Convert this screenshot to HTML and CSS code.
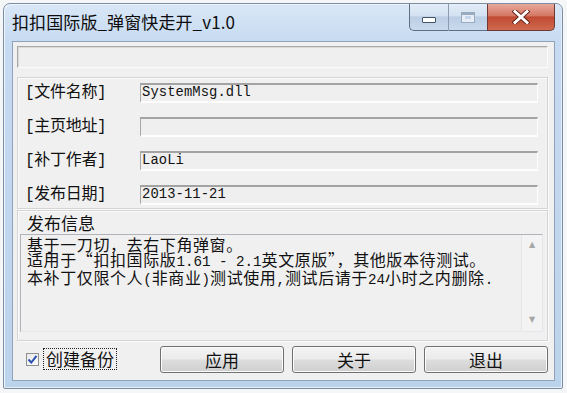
FILE: index.html
```html
<!DOCTYPE html>
<html lang="zh-CN">
<head>
<meta charset="utf-8">
<link rel="stylesheet" href="styles.css">
</head>
<body>
<div class="win">
  <div class="titlebar">
    <span class="title">扣扣国际版_弹窗快走开_v1.0</span>
    <div class="caps">
      <div class="cap min"><span class="min-glyph"></span></div>
      <div class="cap max"><span class="max-glyph"></span></div>
      <div class="cap close"><svg width="22" height="14" viewBox="0 0 22 14"><path d="M5 1.5 L17 12.5 M17 1.5 L5 12.5" stroke="#5a1a10" stroke-width="4.6" stroke-linecap="square"/><path d="M5 1.5 L17 12.5 M17 1.5 L5 12.5" stroke="#fff" stroke-width="3" stroke-linecap="square"/></svg></div>
    </div>
  </div>
  <div class="client">
    <div class="topbox"></div>
    <div class="group fields">
      <div class="row"><span class="label">[文件名称]</span><div class="field"><span class="en">SystemMsg.dll</span></div></div>
      <div class="row"><span class="label">[主页地址]</span><div class="field"></div></div>
      <div class="row"><span class="label">[补丁作者]</span><div class="field"><span class="en">LaoLi</span></div></div>
      <div class="row"><span class="label">[发布日期]</span><div class="field"><span class="en">2013-11-21</span></div></div>
    </div>
    <div class="group info">
      <div class="info-label">发布信息</div>
      <div class="memo">
        <div class="memo-text">
          <div>基于一刀切，去右下角弹窗。</div>
          <div>适用于“扣扣国际版<span class="en">1.61 - 2.1</span>英文原版”，其他版本待测试。</div>
          <div>本补丁仅限个人<span class="en">(</span>非商业<span class="en">)</span>测试使用<span class="en">,</span>测试后请于<span class="en">24</span>小时之内删除<span class="en">.</span></div>
        </div>
        <div class="scroll"><span class="arr">▲</span><span class="arr">▼</span></div>
      </div>
    </div>
    <div class="footer">
      <div class="check">
        <span class="box"><svg width="11" height="11" viewBox="0 0 11 11"><path d="M1.5 5.5 L4.3 8.5 L9.5 1.8" fill="none" stroke="#2a4fb0" stroke-width="2"/></svg></span>
        <span class="check-label">创建备份</span>
      </div>
      <div class="buttons">
        <div class="btn">应用</div>
        <div class="btn">关于</div>
        <div class="btn">退出</div>
      </div>
    </div>
  </div>
</div>
</body>
</html>
```
FILE: styles.css
```css
* { box-sizing: border-box; }
html, body { margin: 0; padding: 0; }
body {
  width: 567px; height: 393px;
  background: #f4f6f8;
  font-family: "Noto Sans CJK SC", sans-serif;
  overflow: hidden;
}
.win {
  margin: 3px;
  width: 560px; height: 386px;
  border: 1px solid #7c8ea3;
  border-radius: 7px 7px 2px 2px;
  background: linear-gradient(180deg, #d9e7f7 0px, #c6daf1 40px, #bcd3ec 100%);
  padding: 0 7px 7px 8px;
  display: flex; flex-direction: column;
  box-shadow: inset 1px 1px 0 #eef5fc, inset -1px -1px 0 #e5eef8;
}
.titlebar {
  height: 37px;
  display: flex; justify-content: space-between; align-items: flex-start;
}
.title {
  margin-top: 7px;
  font-size: 17px; line-height: 22px;
  color: #0c0c0c;
  letter-spacing: 0.1px;
}
.caps { display: flex; margin-top: 0; }
.cap {
  height: 27px;
  border: 1px solid #5f6f83;
  border-top: none;
  display: flex; align-items: center; justify-content: center;
}
.min {
  width: 40px;
  border-radius: 0 0 0 5px;
  background: linear-gradient(180deg, #e4edf8 0%, #d3e1f1 45%, #bccee4 50%, #c9daee 100%);
  border-right: 1px solid #8b9bb0;
}
.max {
  width: 38px;
  border-left: none; border-right: none;
  background: linear-gradient(180deg, #e4edf8 0%, #d3e1f1 45%, #bccee4 50%, #c9daee 100%);
}
.close {
  width: 68px;
  border-radius: 0 0 5px 0;
  background: linear-gradient(180deg, #e9a99c 0%, #d47764 45%, #c04a31 50%, #cf6a4f 100%);
  border-color: #6e3a33;
}
.min-glyph {
  width: 14px; height: 6px;
  margin-top: 5px;
  border: 1px solid #435469;
  background: #fff;
  border-radius: 1px;
}
.max-glyph {
  width: 14px; height: 11px;
  border: 1px solid #9aabbf;
  box-shadow: inset 0 2px 0 #9aabbf, inset 0 0 0 3px #e7eef7;
  background: #c7d6e8;
}
.client {
  flex: 1;
  border: 1px solid #8fa2b7;
  background: #f0f0f0;
  display: flex; flex-direction: column;
  padding: 0 6px 0 4px;
}
.topbox {
  margin-top: 4px;
  height: 22px;
  border: 1px solid;
  border-color: #a8a8a8 #fbfbfb #fbfbfb #a8a8a8;
  box-shadow: inset 1px 1px 0 #dadada;
  background: #efefef;
}
.group {
  border: 1px solid #d4d4d4;
  box-shadow: inset 1px 1px 0 #fbfbfb, 1px 1px 0 #fbfbfb;
}
.fields {
  margin-top: 9px;
  height: 132px;
  padding: 5px 9px 3px 7px;
  display: flex; flex-direction: column; gap: 14px;
}
.row { display: flex; align-items: center; justify-content: space-between; height: 20px; }
.label {
  font-family: "Liberation Mono", "Noto Sans CJK SC", monospace;
  font-size: 16px; line-height: 20px;
  color: #111;
  letter-spacing: -0.3px;
}
.field {
  width: 398px; height: 20px;
  border-top: 2px solid #a3a3a3;
  border-left: 1px solid #a8a8a8;
  border-bottom: 2px solid #fdfdfd;
  border-right: 1px solid #fdfdfd;
  background: #efefef;
  padding-left: 1px;
  display: flex; align-items: center;
}
.en {
  font-family: "Liberation Mono", monospace;
  font-size: 14px;
  color: #111;
}
.field .en { line-height: 16px; font-size: 13.8px; letter-spacing: 0.1px; }
.info {
  margin-top: 1px;
  height: 131px;
  padding: 1px 4px 8px 2px;
  display: flex; flex-direction: column;
}
.info-label {
  height: 22px;
  padding-left: 7px;
  font-size: 17px; line-height: 22px;
  color: #111;
}
.memo {
  flex: 1;
  border: 1px solid;
  border-color: #b0b4ba #e3e6ea #e3e6ea #b0b4ba;
  background: #f0f0f0;
  display: flex;
}
.memo-text {
  flex: 1;
  padding: 2px 0 0 6px;
  font-size: 16px; line-height: 15px;
  color: #111;
  letter-spacing: 0.6px;
}
.memo-text .en { font-size: 14.2px; letter-spacing: 0; }
.scroll {
  width: 21px;
  border-left: 1px solid #e6e6e6;
  background: #f3f3f3;
  display: flex; flex-direction: column; justify-content: space-between; align-items: center;
  padding: 5px 0 6px;
}
.arr { font-size: 8px; color: #a6a6a6; line-height: 10px; font-family: "DejaVu Sans", sans-serif; }
.footer {
  flex: 1;
  display: flex; align-items: center; justify-content: space-between;
  padding: 0 0 3px 9px;
}
.check { display: flex; align-items: center; gap: 5px; }
.box {
  width: 13px; height: 13px;
  border: 1px solid #8e8f8f;
  background: linear-gradient(135deg, #e9eaea, #fcfcfc);
  display: flex; align-items: center; justify-content: center;
}
.check-label {
  font-size: 17px; line-height: 20px;
  padding: 0 2px;
  outline: 1px dotted #222;
  outline-offset: 0;
  color: #111;
}
.buttons { display: flex; gap: 8px; margin-right: 0; }
.btn {
  width: 124px; height: 27px;
  border: 1px solid #707070;
  border-radius: 3px;
  background: linear-gradient(180deg, #f3f3f3 0%, #ebebeb 48%, #dddddd 52%, #cfcfcf 100%);
  box-shadow: inset 0 0 0 1px #fbfbfb;
  display: flex; align-items: center; justify-content: center;
  font-size: 17px; color: #111;
}
```
